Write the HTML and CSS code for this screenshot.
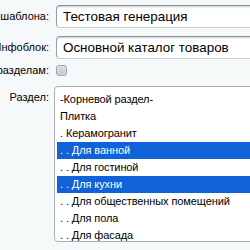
FILE: index.html
```html
<!DOCTYPE html>
<html lang="ru">
<head>
  <meta charset="UTF-8" />
  <meta name="viewport" content="width=device-width, initial-scale=1" />
  <title>Генерация</title>
  <link rel="stylesheet" href="styles.css">
</head>
<body>
  <div class="form">
    <div class="row row-name">
      <div class="label"><span>Название шаблона:</span></div>
      <input type="text" class="field" value="Тестовая генерация" />
    </div>

    <div class="row row-iblock">
      <div class="label"><span>Инфоблок:</span></div>
      <div class="field">Основной каталог товаров</div>
    </div>

    <div class="row row-check">
      <div class="label"><span>Генерировать по разделам:</span></div>
      <span class="checkbox"></span>
    </div>

    <div class="row row-section">
      <div class="label label-top"><span>Раздел:</span></div>
      <div class="listbox">
        <div class="option">-Корневой раздел-</div>
        <div class="option">Плитка</div>
        <div class="option">. Керамогранит</div>
        <div class="option selected">. . Для ванной</div>
        <div class="option">. . Для гостиной</div>
        <div class="option selected">. . Для кухни</div>
        <div class="option">. . Для общественных помещений</div>
        <div class="option">. . Для пола</div>
        <div class="option">. . Для фасада</div>
      </div>
    </div>
  </div>
</body>
</html>
```

FILE: styles.css
```css
body {
  margin: 0;
  background: #f5f9f9;
  color: #000;
  font-family: "Liberation Sans", Arial, sans-serif;
  font-size: 13px;
  overflow: hidden;
}

.form {
  display: flex;
  flex-direction: column;
}

.row {
  display: flex;
  align-items: center;
}

.row-name {
  margin-top: 5px;
  height: 23px;
}

.row-iblock {
  margin-top: 8px;
  height: 23px;
}

.row-check {
  margin-top: 6px;
  height: 11px;
}

.row-section {
  margin-top: 10px;
  align-items: flex-start;
}

.label {
  width: 49px;
  flex-shrink: 0;
  display: flex;
  justify-content: flex-end;
  padding-right: 7px;
  font-size: 11px;
  line-height: 13px;
  white-space: nowrap;
}

.label span {
  flex-shrink: 0;
}

.label-top {
  padding-top: 5px;
  padding-right: 5px;
}

.field {
  box-sizing: border-box;
  flex-shrink: 0;
  width: 260px;
  height: 23px;
  margin: 0;
  padding: 0 6px;
  font: inherit;
  font-size: 13.4px;
  color: #000;
  line-height: 21px;
  background: #fff;
  border: 1px solid;
  border-color: #87919c #959ea9 #c3c9ce #959ea9;
  border-radius: 4px;
  box-shadow: 0 1px 0 0 rgba(255, 255, 255, 0.6), inset 0 2px 2px -1px rgba(180, 188, 191, 0.7);
  outline: none;
}

.checkbox {
  box-sizing: border-box;
  flex-shrink: 0;
  width: 11px;
  height: 11px;
  border: 1px solid #9aa1a8;
  border-radius: 3px;
  background: linear-gradient(#d9dde0, #c3c8cc);
  box-shadow: inset 0 0 0 1px rgba(255, 255, 255, 0.35);
}

.listbox {
  box-sizing: border-box;
  flex-shrink: 0;
  width: 260px;
  height: 156px;
  padding: 4px 0 0 2px;
  overflow: hidden;
  background: #fff;
  border: 1px solid #a9afb5;
  border-radius: 4px;
}

.option {
  height: 17px;
  line-height: 17px;
  padding: 0 3px;
  font-size: 11px;
  letter-spacing: -0.1px;
  white-space: nowrap;
}

.option.selected {
  background: #0f62d8;
  color: #fff;
}
```
